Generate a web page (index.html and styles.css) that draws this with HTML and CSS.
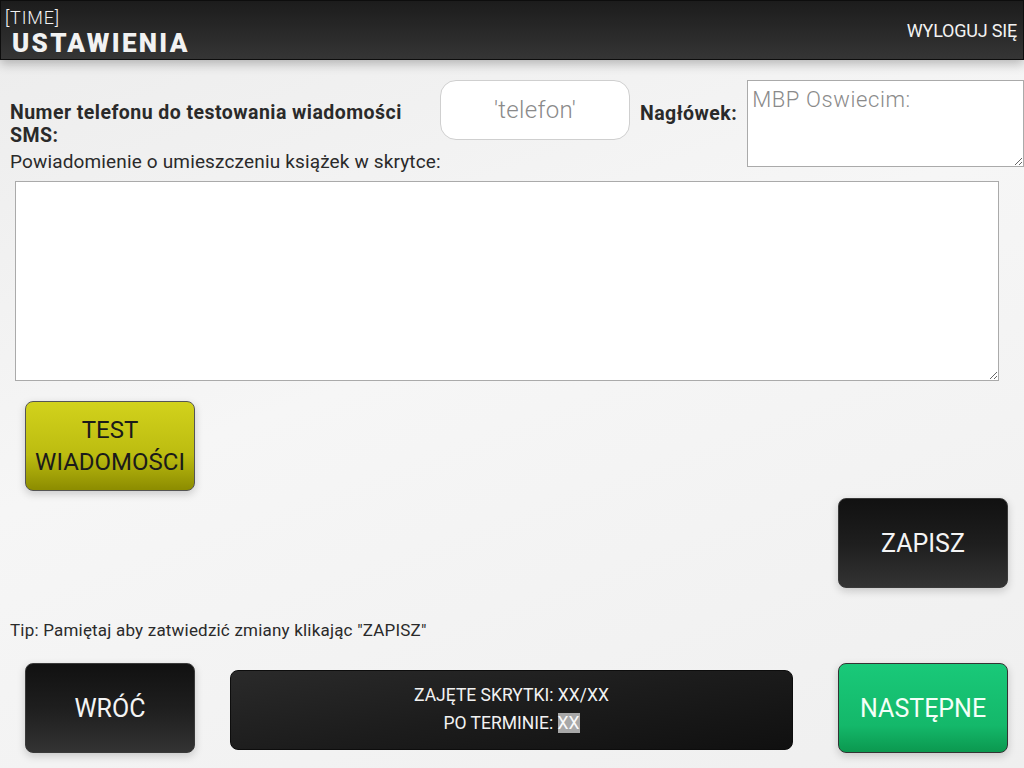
FILE: index.html
```html
<!DOCTYPE html>
<html lang="pl">
<head>
    <meta charset="UTF-8">
    <meta name="viewport" content="width=device-width, initial-scale=1.0">
    <title>Ustawienia</title>
    <link rel="stylesheet" href="styles.css">
</head>
<body>
    <header class="topbar">
        <div class="topbar-title">
            <div class="time">[TIME]</div>
            <h1>USTAWIENIA</h1>
        </div>
        <a class="logout" href="#">WYLOGUJ SIĘ</a>
    </header>

    <main class="settings">
        <div class="top-row">
            <div class="label-col">
                <label class="bold-label" for="phone">Numer telefonu do testowania wiadomości SMS:</label>
                <p class="field-label">Powiadomienie o umieszczeniu książek w skrytce:</p>
            </div>
            <input type="text" id="phone" class="phone-input" placeholder="'telefon'">
            <label class="bold-label header-label" for="heading">Nagłówek:</label>
            <textarea id="heading" class="heading-input" placeholder="MBP Oswiecim:"></textarea>
        </div>

        <textarea class="message-input"></textarea>

        <button class="btn btn-yellow test-btn">TEST<br>WIADOMOŚCI</button>

        <div class="save-row">
            <button class="btn btn-dark">ZAPISZ</button>
        </div>

        <p class="tip">Tip: Pamiętaj aby zatwiedzić zmiany klikając "ZAPISZ"</p>

        <div class="bottom-row">
            <button class="btn btn-dark">WRÓĆ</button>
            <div class="status-panel">
                <div>ZAJĘTE SKRYTKI: XX/XX</div>
                <div>PO TERMINIE: <span class="mark">XX</span></div>
            </div>
            <button class="btn btn-green">NASTĘPNE</button>
        </div>
    </main>
</body>
</html>
```

FILE: styles.css
```css
body {
    margin: 0;
    background: linear-gradient(160deg, #ececec 0%, #f6f6f6 45%, #efefef 100%);
    font-family: Roboto, "Noto Sans", sans-serif;
    color: #222;
    height: 768px;
    overflow: hidden;
}

.topbar {
    height: 58px;
    display: flex;
    justify-content: space-between;
    align-items: flex-start;
    background: linear-gradient(180deg, #1c1c1c 0%, #282828 50%, #353535 100%);
    border: 1px solid #0d0d0d;
    box-shadow: 0 4px 10px rgba(0, 0, 0, 0.25);
    color: #f2f2f2;
}

.topbar-title {
    padding: 7px 0 0 4px;
}

.time {
    font-size: 18px;
    font-weight: 300;
    line-height: 20px;
    letter-spacing: 0.8px;
}

h1 {
    margin: 1px 0 0 7px;
    font-size: 26px;
    font-weight: 900;
    line-height: 28px;
    letter-spacing: 2.3px;
}

.logout {
    color: #f2f2f2;
    text-decoration: none;
    font-size: 18px;
    letter-spacing: -0.2px;
    margin: 19px 6px 0 0;
}

.top-row {
    display: flex;
    align-items: flex-start;
    padding-top: 20px;
}

.label-col {
    width: 420px;
    padding: 21px 0 0 10px;
}

.bold-label {
    display: block;
    font-weight: bold;
    font-size: 19.5px;
    letter-spacing: 0.45px;
    line-height: 23px;
    color: #2a2a2a;
    width: 400px;
}

.field-label {
    margin: 3px 0 0;
    font-size: 19px;
    letter-spacing: 0.15px;
    line-height: 23px;
    color: #2a2a2a;
    white-space: nowrap;
}

.phone-input {
    box-sizing: border-box;
    width: 190px;
    height: 60px;
    margin-left: 10px;
    border: 1px solid #cfcfcf;
    border-radius: 16px;
    background: #fff;
    text-align: center;
    font-family: Roboto, sans-serif;
    font-size: 24px;
    font-weight: 300;
    letter-spacing: 0.3px;
}

.phone-input::placeholder,
.heading-input::placeholder {
    color: #8a8a8a;
}

.header-label {
    width: auto;
    margin: 22px 10px 0 10px;
}

.heading-input {
    box-sizing: border-box;
    width: 277px;
    height: 87px;
    border: 1px solid #aaa;
    padding: 6px 4px;
    font-family: Roboto, sans-serif;
    font-size: 22px;
    font-weight: 300;
    letter-spacing: 0.6px;
    resize: vertical;
}

.message-input {
    display: block;
    box-sizing: border-box;
    width: 984px;
    height: 200px;
    margin: 8px 0 0 15px;
    border: 1px solid #aaa;
    background: #fff;
}

.btn {
    box-sizing: border-box;
    width: 170px;
    height: 90px;
    border-radius: 8px;
    font-family: Roboto, sans-serif;
    font-size: 25px;
    font-weight: 400;
    cursor: pointer;
    box-shadow: 0 3px 8px rgba(0, 0, 0, 0.18);
}

.btn-dark {
    color: #f4f4f4;
    border: 1px solid #3a3a3a;
    background: linear-gradient(180deg, #111 0%, #1e1e1e 50%, #333 100%);
}

.btn-yellow {
    color: #1a1a1a;
    border: 1px solid #555;
    background: linear-gradient(180deg, #d2d21c 0%, #bcbc10 60%, #8c8c00 100%);
    font-size: 24px;
    line-height: 32px;
}

.btn-green {
    color: #f4fff8;
    border: 1px solid #333;
    background: linear-gradient(180deg, #19c979 0%, #14b86a 70%, #0b984f 100%);
}

.test-btn {
    display: block;
    margin: 20px 0 0 25px;
}

.save-row {
    display: flex;
    justify-content: flex-end;
    padding-right: 16px;
    margin-top: 7px;
}

.tip {
    margin: 32px 0 0 10px;
    font-size: 17px;
    letter-spacing: 0.2px;
    line-height: 20px;
    color: #2a2a2a;
}

.bottom-row {
    display: flex;
    align-items: flex-start;
    margin-top: 23px;
    padding: 0 16px 0 25px;
}

.status-panel {
    box-sizing: border-box;
    width: 564px;
    height: 80px;
    margin: 7px 45px 0 35px;
    border: 1px solid #0d0d0d;
    border-radius: 8px;
    background: linear-gradient(170deg, #2a2a2a 0%, #1c1c1c 50%, #101010 100%);
    color: #f2f2f2;
    font-size: 17.5px;
    line-height: 28px;
    text-align: center;
    padding-top: 10px;
}

.mark {
    background: #a8a8a8;
    color: #fafafa;
}
```
